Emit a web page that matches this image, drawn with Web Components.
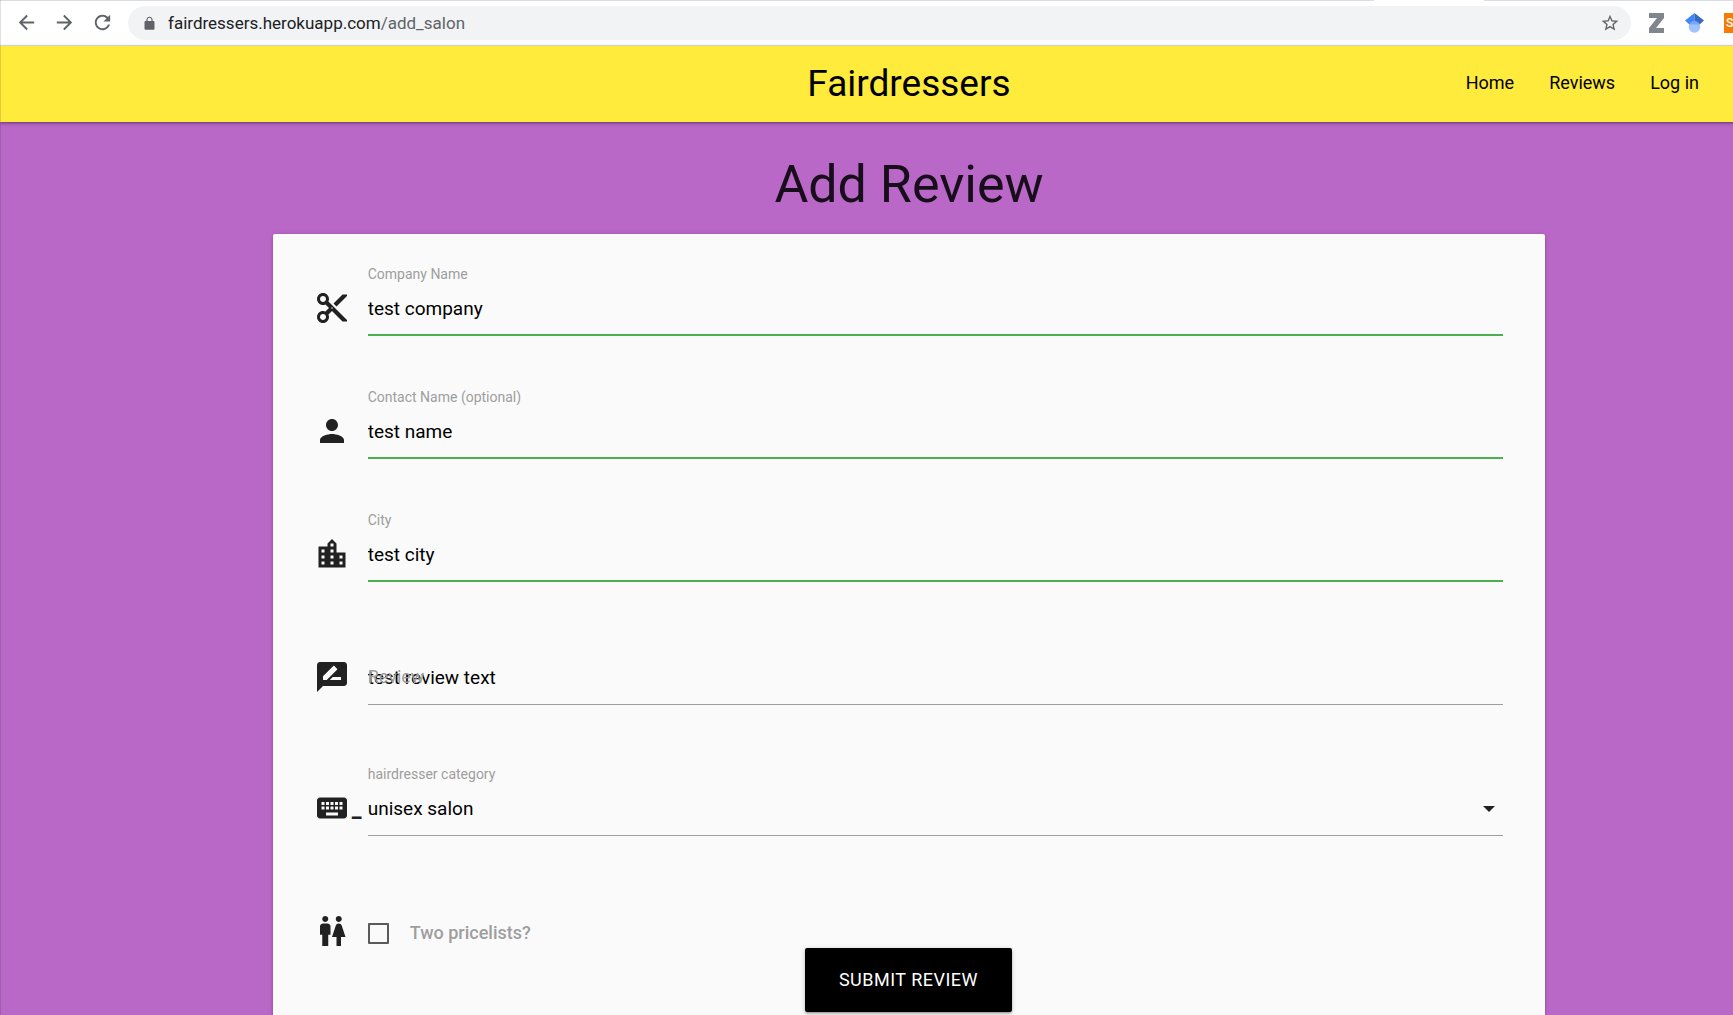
<!DOCTYPE html>
<html lang="en">
<head>
<meta charset="utf-8">
<title>Fairdressers</title>
<style>
html{font-family:Roboto,sans-serif;overflow-x:hidden;background:#ba68c8}
body{margin:0;overflow-x:hidden}
</style>
</head>
<body>
<salon-window>
  <browser-bar slot="chrome" host="fairdressers.herokuapp.com" path="/add_salon"></browser-bar>
  <salon-nav slot="nav" brand="Fairdressers"></salon-nav>
  <salon-card heading="Add Review">
    <text-field label="Company Name" value="test company" icon="cut"></text-field>
    <text-field label="Contact Name (optional)" value="test name" icon="person"></text-field>
    <text-field label="City" value="test city" icon="city"></text-field>
    <review-field label="Review" value="test review text"></review-field>
    <select-field label="hairdresser category"></select-field>
    <check-field label="Two pricelists?"></check-field>
    <submit-button slot="action">Submit Review</submit-button>
  </salon-card>
</salon-window>
<script>
const define = (name, render) => customElements.define(name, class extends HTMLElement {
  connectedCallback() {
    if (this.shadowRoot) return;
    this.attachShadow({mode: 'open'}).innerHTML = render(this);
  }
});
const at = (el, name) => el.getAttribute(name) || '';

const ICONS = {
  cut: '<path d="M9.64 7.64c.23-.5.36-1.05.36-1.64 0-2.21-1.79-4-4-4S2 3.79 2 6s1.79 4 4 4c.59 0 1.14-.13 1.64-.36L10 12l-2.36 2.36C7.14 14.13 6.59 14 6 14c-2.21 0-4 1.79-4 4s1.79 4 4 4 4-1.79 4-4c0-.59-.13-1.14-.36-1.64L12 14l7 7h3v-1L9.64 7.64zM6 8c-1.1 0-2-.89-2-2s.9-2 2-2 2 .89 2 2-.9 2-2 2zm0 12c-1.1 0-2-.89-2-2s.9-2 2-2 2 .89 2 2-.9 2-2 2zm6-7.5c-.28 0-.5-.22-.5-.5s.22-.5.5-.5.5.22.5.5-.22.5-.5.5zM19 3l-6 6 2 2 7-7V3z"/>',
  person: '<path d="M12 12c2.21 0 4-1.79 4-4s-1.79-4-4-4-4 1.79-4 4 1.79 4 4 4zm0 2c-2.67 0-8 1.34-8 4v2h16v-2c0-2.66-5.33-4-8-4z"/>',
  city: '<path d="M15 11V5l-3-3-3 3v2H3v14h18V11h-6zm-8 8H5v-2h2v2zm0-4H5v-2h2v2zm0-4H5V9h2v2zm6 8h-2v-2h2v2zm0-4h-2v-2h2v2zm0-4h-2V9h2v2zm0-4h-2V5h2v2zm6 12h-2v-2h2v2zm0-4h-2v-2h2v2z"/>',
  review: '<path d="M20 2H4c-1.1 0-1.99.9-1.99 2L2 22l4-4h14c1.1 0 2-.9 2-2V4c0-1.1-.9-2-2-2zM6 14v-2.47l6.88-6.88c.2-.2.51-.2.71 0l1.77 1.77c.2.2.2.51 0 .71L8.47 14H6zm12 0h-7.5l2-2H18v2z"/>',
  keyboard: '<path d="M20 5H4c-1.1 0-1.99.9-1.99 2L2 17c0 1.1.9 2 2 2h16c1.1 0 2-.9 2-2V7c0-1.1-.9-2-2-2zm-9 3h2v2h-2V8zm0 3h2v2h-2v-2zM8 8h2v2H8V8zm0 3h2v2H8v-2zm-1 2H5v-2h2v2zm0-3H5V8h2v2zm9 7H8v-2h8v2zm0-4h-2v-2h2v2zm0-3h-2V8h2v2zm3 3h-2v-2h2v2zm0-3h-2V8h2v2z"/>',
  wc: '<path d="M5.5 22v-7.500H4V9c0-1.100.9-2 2-2h3c1.100 0 2 .9 2 2v5.500H9.500V22h-4zM18 22v-6h3l-2.540-7.630C18.180 7.550 17.420 7 16.560 7h-.120c-.860 0-1.630.550-1.900 1.370L12 16h3v6h3zM7.500 6c1.110 0 2-.890 2-2s-.890-2-2-2-2 .890-2 2 .890 2 2 2zm9 0c1.110 0 2-.890 2-2s-.890-2-2-2-2 .890-2 2 .890 2 2 2z"/>',
  back: '<path d="M20 11H7.830l5.590-5.590L12 4l-8 8 8 8 1.410-1.410L7.830 13H20v-2z"/>',
  forward: '<path d="M12 4l-1.410 1.410L16.170 11H4v2h12.170l-5.580 5.590L12 20l8-8z"/>',
  reload: '<path d="M17.650 6.350C16.200 4.900 14.210 4 12 4c-4.420 0-7.990 3.580-7.990 8s3.570 8 7.990 8c3.730 0 6.840-2.550 7.730-6h-2.080c-.820 2.330-3.040 4-5.650 4-3.310 0-6-2.690-6-6s2.690-6 6-6c1.660 0 3.140.690 4.220 1.780L13 11h7V4l-2.350 2.350z"/>',
  lock: '<path d="M18 8h-1V6c0-2.760-2.240-5-5-5S7 3.240 7 6v2H6c-1.100 0-2 .9-2 2v10c0 1.100.9 2 2 2h12c1.100 0 2-.9 2-2V10c0-1.100-.9-2-2-2zM8.900 8V6c0-1.710 1.390-3.100 3.100-3.100s3.100 1.390 3.100 3.100v2H8.900z"/>',
  star: '<path d="M22 9.240l-7.190-.620L12 2 9.190 8.630 2 9.240l5.460 4.730L5.820 21 12 17.270 18.180 21l-1.630-7.030L22 9.240zM12 15.400l-3.760 2.270 1-4.280-3.320-2.880 4.380-.380L12 6.100l1.710 4.040 4.380.380-3.320 2.880 1 4.280L12 15.400z"/>'
};
define('md-icon', el => `<style>
  :host{display:block;width:var(--size,36px);height:var(--size,36px);flex:none}
  svg{display:block;width:100%;height:100%;fill:currentColor}
</style><svg viewBox="0 0 24 24" aria-hidden="true">${ICONS[at(el, 'name')]}</svg>`);

/* The layout is laid out wider than the window; its right end is clipped. */
define('salon-window', () => `<style>
  :host{display:flex;flex-direction:column;position:relative;width:calc(100% + 85px);min-height:100vh;background:#ba68c8}
  .edge{position:absolute;left:0;top:0;bottom:0;width:1px;background:rgba(0,0,0,.12);z-index:3}
  main{flex:1;display:flex;flex-direction:column}
</style><slot name="chrome"></slot><slot name="nav"></slot><main><slot></slot></main><div class="edge"></div>`);

define('browser-bar', el => `<style>
  :host{display:flex;align-items:center;height:45px;border-bottom:1px solid #dadce0;color:#5f6368;
    background:linear-gradient(90deg,#dadce0 1374px,#fff 1374px,#fff 1484px,#dadce0 1484px) 0 0/100% 1px no-repeat #fff}
  button{border:0;background:none;padding:0;color:inherit;display:grid;place-items:center;width:38px;height:34px}
  .tools{display:flex;padding-left:7px;--size:23px;width:128px;box-sizing:border-box}
  .pill{display:flex;align-items:center;width:1503px;height:34px;border-radius:17px;background:#f1f3f4;box-sizing:border-box;padding:0 2px 0 14px;flex:none;margin-top:1px}
  .lock{--size:15px}
  .url{flex:1;padding-left:11px;font-size:17px;line-height:20px;color:#5f6368}
  .url b{font-weight:400;color:#202124}
  .star{--size:20px}
  .ext{display:flex;align-items:center;gap:20px;padding-left:18px}
  .s{display:flex;width:20px;height:20px;background:#f57c00;color:#fff;align-items:center;padding-left:2px;box-sizing:border-box;font:500 12px Roboto,sans-serif}
</style>
<div class="tools">
  <button aria-label="Back"><md-icon name="back"></md-icon></button>
  <button aria-label="Forward"><md-icon name="forward"></md-icon></button>
  <button aria-label="Reload"><md-icon name="reload"></md-icon></button>
</div>
<div class="pill"><md-icon class="lock" name="lock"></md-icon>
  <span class="url"><b>${at(el, 'host')}</b>${at(el, 'path')}</span>
  <button aria-label="Bookmark"><md-icon class="star" name="star"></md-icon></button></div>
<div class="ext">
  <svg width="16" height="20" viewBox="0 0 16 20"><path d="M0 0h15v5L7 15h8v5H0v-5L8 5H0z" fill="#80868b"/></svg>
  <svg width="19" height="20" viewBox="0 0 19 20"><path d="M9.500 0L0 7.500l5 4.500h4.500z" fill="#4285f4"/><path d="M9.500 0L19 7.500 14 12H9.500z" fill="#356ac3"/><circle cx="9.500" cy="14" r="5.800" fill="#a0c3ff"/><path d="M4.300 11.500a5.800 5.800 0 0 1 10.400 0z" fill="#76a7fa"/></svg>
  <span class="s">S</span>
</div>`);

define('salon-nav', el => `<style>
  :host{display:block;position:relative;z-index:1}
  nav{display:grid;grid-template-columns:1fr auto 1fr;align-items:center;height:76px;background:#ffeb3b;box-shadow:0 2px 2px rgba(0,0,0,.14),0 3px 1px -2px rgba(0,0,0,.12),0 1px 5px rgba(0,0,0,.2)}
  a{color:#000;text-decoration:none}
  .brand{grid-column:2;font-size:37px;line-height:76px}
  ul{display:flex;justify-content:flex-end;gap:35px;list-style:none;margin:0;padding:0 119px 2px 0;font-size:18px;line-height:24px}
</style><nav><a class="brand" href="#">${at(el, 'brand')}</a>
<ul><li><a href="#">Home</a></li><li><a href="#">Reviews</a></li><li><a href="#">Log in</a></li></ul></nav>`);

define('salon-card', el => `<style>
  :host{display:flex;flex-direction:column;flex:1;width:70%;margin:0 auto}
  h1{margin:34px 0 20px;font-weight:400;font-size:52px;line-height:58px;text-align:center;color:rgba(0,0,0,.87)}
  form{flex:1;display:flex;flex-direction:column;gap:51px;padding:30px 42px 0 41px;background:#fafafa;border-radius:2px 2px 0 0;box-shadow:0 2px 2px rgba(0,0,0,.14),0 3px 1px -2px rgba(0,0,0,.12),0 1px 5px rgba(0,0,0,.2)}
  ::slotted([slot=action]){margin:-52px auto 3px}
</style><h1>${at(el, 'heading')}</h1><form><slot></slot><slot name="action"></slot></form>`);

const FIELD = `
  :host{display:grid;grid-template-columns:54px 1fr;grid-template-rows:18px 54px;color:#212121;position:relative}
  label{grid-column:2;font-size:14px;line-height:20px;color:#9e9e9e}
  .icon{grid-column:1;grid-row:2;display:flex;height:52px;align-items:center}
  input,textarea,select{grid-column:2;grid-row:2;box-sizing:border-box;width:100%;height:54px;margin:0;padding:0;border:0;border-radius:0;outline:0;background:none;color:#000;font:19px Roboto,sans-serif;border-bottom:1px solid #9e9e9e}
`;

define('text-field', el => `<style>${FIELD}input{border-bottom:2px solid #4caf50}</style>
<label for="f">${at(el, 'label')}</label><div class="icon"><md-icon name="${at(el, 'icon')}"></md-icon></div>
<input id="f" type="text" value="${at(el, 'value')}">`);

define('review-field', el => `<style>${FIELD}
  textarea{padding-top:16px;line-height:22px;resize:none;overflow:hidden;display:block}
  label{grid-row:2;position:absolute;font-size:18px;line-height:52px;pointer-events:none}
</style><div class="icon"><md-icon name="review"></md-icon></div>
<textarea id="f">${at(el, 'value')}</textarea><label for="f">${at(el, 'label')}</label>`);

define('select-field', el => `<style>${FIELD}
  :host{margin-top:8px}
  select{appearance:none}
  .tail{font-size:22px;font-weight:700;line-height:24px;padding:4px 0 0 2px}
  .arrow{grid-column:2;grid-row:2;align-self:center;justify-self:end;margin-right:8px;pointer-events:none}
</style><label for="f">${at(el, 'label')}</label><div class="icon"><md-icon name="keyboard"></md-icon><span class="tail">_</span></div>
<select id="f"><option>unisex salon</option></select>
<svg class="arrow" width="12" height="6" viewBox="0 0 12 6"><path d="M0 0h12L6 6z" fill="#212121"/></svg>`);

define('check-field', el => `<style>
  :host{display:flex;align-items:center;height:36px;margin-top:26px;color:#212121}
  label{display:flex;align-items:center;gap:21px;padding:4px 0 0 18px;font-size:18px;font-weight:500;line-height:22px;color:#9e9e9e}
  input{appearance:none;box-sizing:border-box;width:21px;height:21px;margin:0;border:2px solid #5a5a5a;border-radius:1px}
</style><md-icon name="wc"></md-icon><label><input type="checkbox">${at(el, 'label')}</label>`);

define('submit-button', () => `<style>
  :host{display:block}
  button{display:block;height:64px;padding:0 34px 2px;border:0;border-radius:2px;background:#000;color:#fff;font:18px Roboto,sans-serif;letter-spacing:.5px;text-transform:uppercase;box-shadow:0 2px 2px rgba(0,0,0,.14),0 3px 1px -2px rgba(0,0,0,.12),0 1px 5px rgba(0,0,0,.2)}
</style><button type="submit"><slot></slot></button>`);
</script>
</body>
</html>
